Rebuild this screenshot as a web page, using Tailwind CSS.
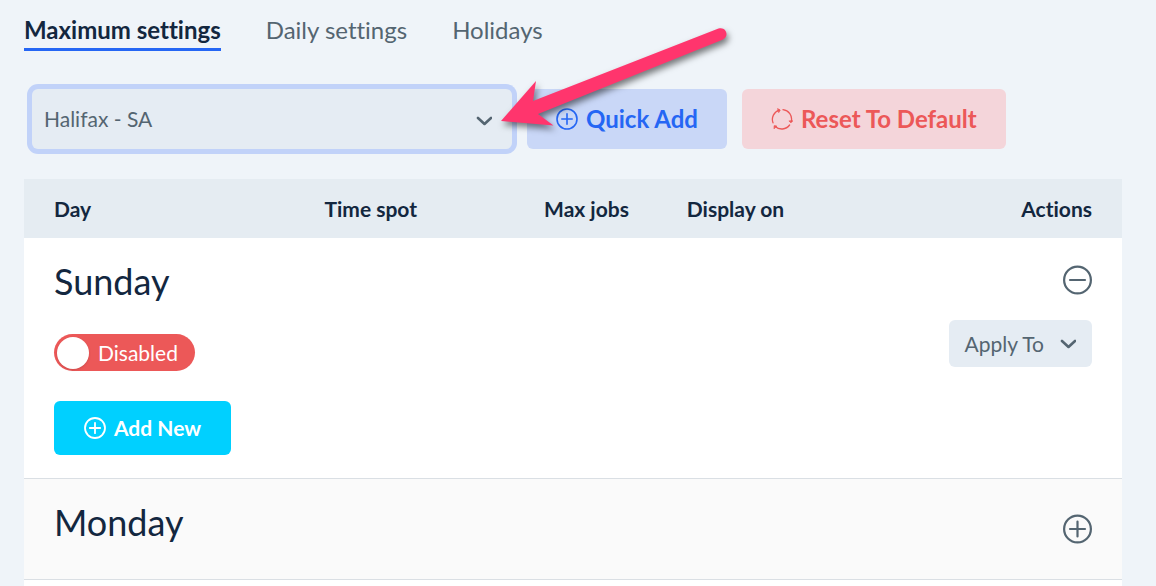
<!DOCTYPE html>
<html lang="en">

<head>
    <meta charset="UTF-8">
    <meta name="viewport" content="width=device-width, initial-scale=1">
    <title>Maximum settings</title>
    <script src="https://cdn.jsdelivr.net/npm/@tailwindcss/browser@4"></script>
</head>

<body class="bg-[#eff4f9] text-[#13273f] font-['Lato',sans-serif] [font-variant-ligatures:none]">
    <main class="relative pl-6 pr-[34px] pt-4">
        <!-- Tabs -->
        <nav>
            <ul class="flex gap-[45px] text-2xl leading-[28px] text-[#546571]">
                <li><a href="#" class="block border-b-3 border-[#2566f4] pb-1 font-bold text-[#13273f]">Maximum settings</a></li>
                <li><a href="#" class="block">Daily settings</a></li>
                <li><a href="#" class="block">Holidays</a></li>
            </ul>
        </nav>

        <!-- Toolbar -->
        <div class="mt-[38px] flex gap-[15px] pl-2">
            <div class="relative w-[480px]">
                <select aria-label="Location" class="h-[60px] w-full appearance-none rounded-md bg-[#e5ecf3] pl-3 pr-12 text-[21px] text-[#546571] outline-none ring-5 ring-[#c1d2f9]">
                    <option>Halifax - SA</option>
                </select>
                <svg class="pointer-events-none absolute right-5 top-[27px] h-2.5 w-4" viewBox="0 0 16 10" fill="none" stroke="#546571" stroke-width="2.6" stroke-linecap="round" stroke-linejoin="round">
                    <path d="M2 2l6.500 6 6.500-6" />
                </svg>
            </div>
            <button type="button" class="flex h-[60px] items-center justify-center gap-2 rounded-md bg-[#c9d7f7] px-[29px] text-2xl font-bold text-[#2566f4]">
                <svg class="size-[22px]" viewBox="0 0 22 22" fill="none" stroke="currentColor" stroke-width="1.6" stroke-linecap="round">
                    <circle cx="11" cy="11" r="10" />
                    <path d="M11 5.8v10.4M5.8 11h10.4" />
                </svg>
                Quick Add
            </button>
            <button type="button" class="flex h-[60px] items-center justify-center gap-2 rounded-md bg-[#f4d5da] px-[29px] text-2xl font-bold text-[#ec5858]">
                <svg class="size-[22px]" viewBox="0 0 22 22" fill="none" stroke="currentColor" stroke-width="1.3" stroke-linecap="round">
                    <path d="M2 14.8A9.6 9.6 0 0 1 8.3 2.2M12 1.6A9.6 9.6 0 0 1 20.3 13.4M18.6 17A9.6 9.6 0 0 1 4 18.2" />
                    <path d="M6.9.8l2.3 1.3-1.3 2.2zM21.6 13l-1.6 1.8-1.8-1.6zM3 20.4l.2-2.7 2.4.4z" fill="currentColor" stroke-width=".8" />
                </svg>
                Reset To Default
            </button>
        </div>

        <!-- Days -->
        <table class="mt-[30px] w-full table-fixed bg-white text-left">
            <thead class="bg-[#e5ecf2] text-[21px]">
                <tr class="h-[59px]">
                    <th class="w-[26%] pl-[30px]">Day</th>
                    <th class="w-[20%] px-[15px]">Time spot</th>
                    <th class="w-[13%] px-[15px]">Max jobs</th>
                    <th class="px-[15px]">Display on</th>
                    <th class="pr-[30px] text-right">Actions</th>
                </tr>
            </thead>
            <tbody>
                <tr class="border-b border-[#dadfe4] align-top">
                    <td colspan="4" class="pb-[23px] pl-[30px] pt-5">
                        <h2 class="text-4xl leading-[46px]">Sunday</h2>
                        <label class="mt-[30px] flex h-[37px] w-[141px] items-center gap-[9px] rounded-full bg-[#ec5858] pl-[3px] text-[21px] text-white">
                            <input type="checkbox" class="size-8 appearance-none rounded-full bg-white shadow">
                            Disabled
                        </label>
                        <button type="button" class="mt-[30px] flex h-[54px] items-center gap-2 rounded-md bg-[#00d0ff] px-[30px] text-[21px] font-bold text-white">
                            <svg class="size-[22px]" viewBox="0 0 22 22" fill="none" stroke="currentColor" stroke-width="1.8" stroke-linecap="round">
                                <circle cx="11" cy="11" r="10" />
                                <path d="M11 5.8v10.4M5.8 11h10.4" />
                            </svg>
                            Add New
                        </button>
                    </td>
                    <td class="pr-[30px] pt-[27px]">
                        <div class="flex flex-col items-end gap-[25px]">
                            <button type="button" aria-label="Collapse Sunday">
                                <svg class="size-[30px]" viewBox="0 0 30 30" fill="none" stroke="#546571" stroke-width="2.2" stroke-linecap="round">
                                    <circle cx="15.500" cy="15" r="13.400" />
                                    <path d="M8 15h15" />
                                </svg>
                            </button>
                            <button type="button" class="flex h-[47px] items-center gap-4 rounded-md bg-[#e5ecf3] px-4 text-[21px] text-[#546571]">
                                Apply To
                                <svg class="h-2.5 w-4" viewBox="0 0 16 10" fill="none" stroke="currentColor" stroke-width="2.6" stroke-linecap="round" stroke-linejoin="round">
                                    <path d="M2 2l6.500 6 6.500-6" />
                                </svg>
                            </button>
                        </div>
                    </td>
                </tr>
                <tr class="border-b border-[#dadfe4] bg-[#fafafa] align-top">
                    <td colspan="4" class="pb-[34px] pl-[30px] pt-5">
                        <h2 class="text-4xl leading-[46px]">Monday</h2>
                    </td>
                    <td class="pr-[30px] pt-[35px]">
                        <div class="flex justify-end">
                            <button type="button" aria-label="Expand Monday">
                                <svg class="size-[30px]" viewBox="0 0 30 30" fill="none" stroke="#546571" stroke-width="2.2" stroke-linecap="round">
                                    <circle cx="15.500" cy="15" r="13.400" />
                                    <path d="M8 15h15M15.500 7.500v15" />
                                </svg>
                            </button>
                        </div>
                    </td>
                </tr>
                <tr>
                    <td colspan="5" class="h-1.5"></td>
                </tr>
            </tbody>
        </table>

        <!-- Pointer to the location drop-down -->
        <svg class="pointer-events-none absolute left-[490px] top-5 h-[120px] w-[250px] drop-shadow-[2px_4px_3px_rgba(0,0,0,0.5)]" viewBox="490 20 250 120" fill="#ff356d">
            <path d="M501 121L536 81L533 101L718.5 28.600C726 26 730 36.500 722.500 39.800L538 114L553.500 125.500Z" />
        </svg>
    </main>
</body>

</html>
